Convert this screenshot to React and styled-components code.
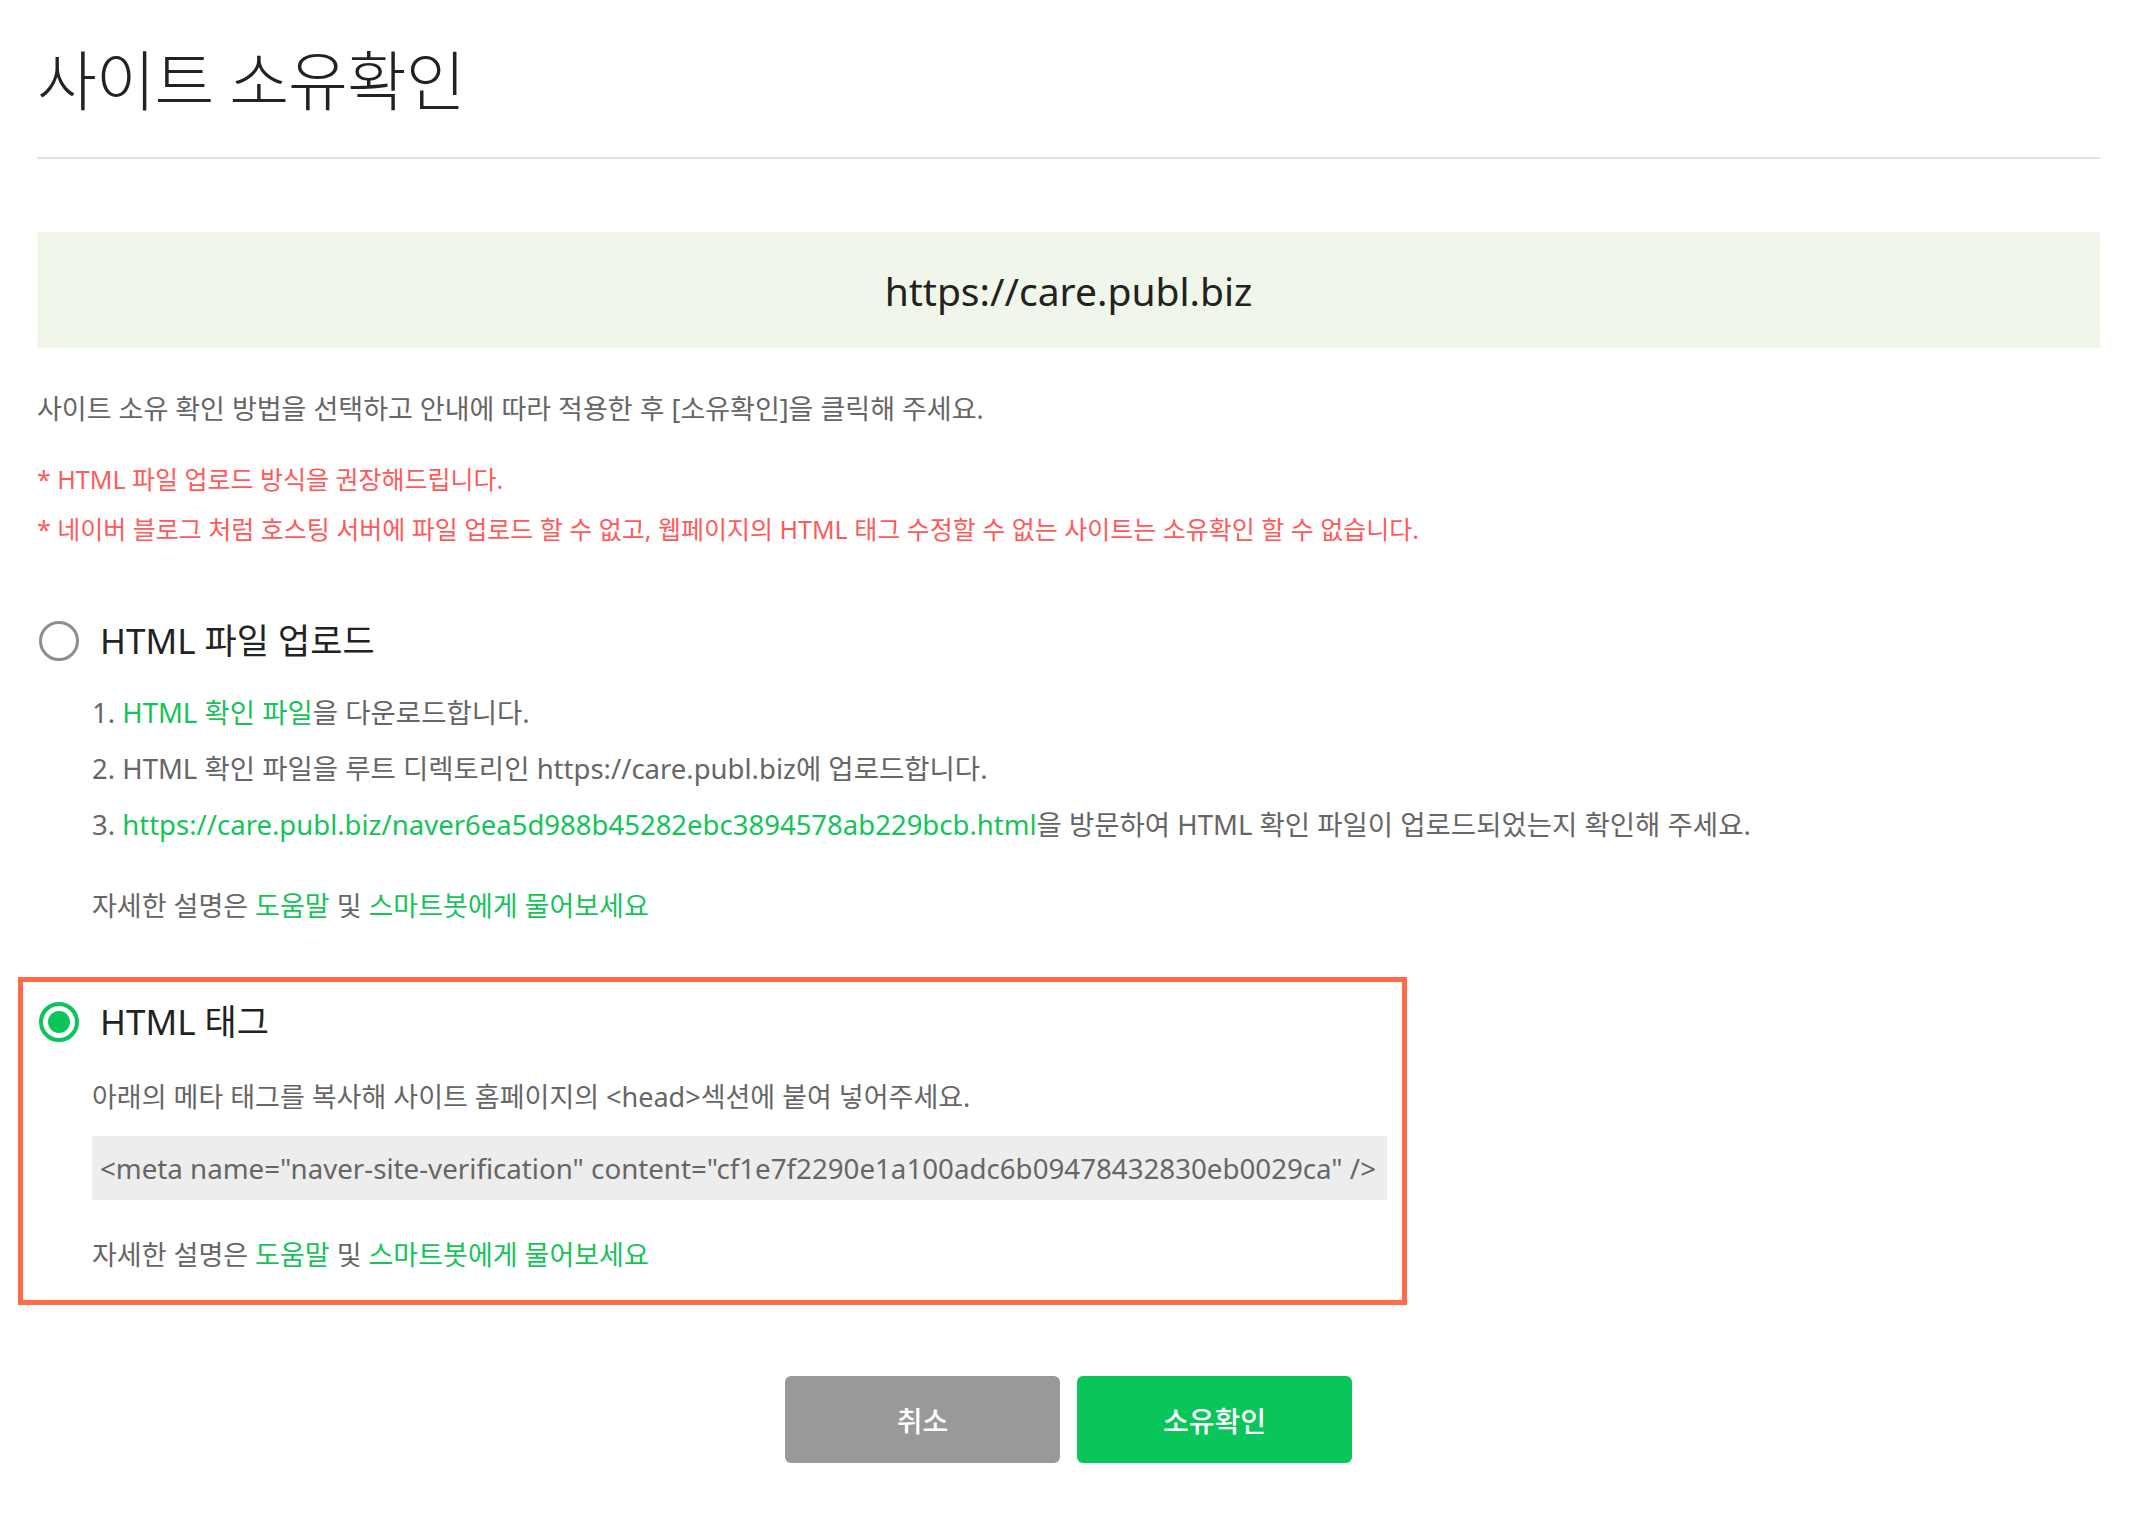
import React from 'react';
import styled, { createGlobalStyle } from 'styled-components';

const GlobalStyle = createGlobalStyle`
  html, body { margin: 0; padding: 0; background: #fff; }
  body {
    font-family: "Noto Sans", "Noto Sans CJK KR", sans-serif;
    -webkit-font-smoothing: antialiased;
  }
`;

const Page = styled.div`
  padding: 40px 38px 60px 37px;
`;

const Title = styled.h1`
  margin: 0;
  font-size: 65px;
  line-height: 80px;
  font-weight: 300;
  color: #222;
  letter-spacing: -1px;
`;

const Divider = styled.hr`
  margin: 37px 0 0;
  border: 0;
  height: 2px;
  background: #e2e2e2;
`;

const UrlBanner = styled.div`
  margin-top: 73px;
  height: 116px;
  background: #f0f6e9;
  display: flex;
  align-items: center;
  justify-content: center;
  font-size: 39px;
  color: #222;
`;

const Guide = styled.p`
  margin: 43px 0 0;
  font-size: 27px;
  line-height: 36px;
  color: #666;
`;

const Notes = styled.ul`
  margin: 27px 0 0;
  padding: 0;
  list-style: none;
`;

const Note = styled.li`
  font-size: 25px;
  line-height: 50px;
  color: #ff5a5a;
`;

const Methods = styled.div`
  margin: 42px 0 0 -19px;
  display: flex;
  flex-direction: column;
  align-items: flex-start;
  gap: 21px;
`;

const Method = styled.section`
  box-sizing: border-box;
  width: ${(p) => (p.$selected ? '1389px' : 'auto')};
  border: 5px solid ${(p) => (p.$selected ? '#ff6c47' : 'transparent')};
  padding: 20px 15px 27px 16px;
`;

const MethodHeader = styled.label`
  display: flex;
  align-items: center;
  gap: 21px;
  height: 40px;
`;

const Radio = styled.span`
  box-sizing: border-box;
  flex: none;
  width: 40px;
  height: 40px;
  border-radius: 50%;
  border: ${(p) => (p.$checked ? '4px solid #0bc45a' : '3px solid #8e8e8e')};
  display: flex;
  align-items: center;
  justify-content: center;
  &::after {
    content: '';
    width: 22px;
    height: 22px;
    border-radius: 50%;
    background: #0bc45a;
    display: ${(p) => (p.$checked ? 'block' : 'none')};
  }
`;

const MethodLabel = styled.span`
  font-size: 35px;
  line-height: 40px;
  color: #222;
`;

const Details = styled.div`
  padding-left: 53px;
`;

const Steps = styled.ol`
  margin: 24px 0 0;
  padding: 0;
  list-style: none;
`;

const Step = styled.li`
  font-size: 27.5px;
  line-height: 56px;
  color: #666;
  white-space: nowrap;
`;

const Text = styled.p`
  margin: ${(p) => p.$gap}px 0 0;
  font-size: 27px;
  line-height: 36px;
  color: #666;
`;

const Link = styled.a`
  color: #16c35a;
  text-decoration: none;
`;

const CodeBox = styled.div`
  margin-top: 21px;
  height: 64px;
  background: #ededed;
  display: flex;
  align-items: center;
  padding-left: 8px;
  font-size: 27.7px;
  color: #666;
  white-space: nowrap;
`;

const ButtonRow = styled.div`
  margin-top: 71px;
  display: flex;
  justify-content: center;
  gap: 17px;
`;

const Button = styled.button`
  width: 275px;
  height: 87px;
  border: 0;
  border-radius: 6px;
  background: ${(p) => (p.$primary ? '#08c65a' : '#999999')};
  color: #fff;
  font-family: inherit;
  font-size: 28px;
  font-weight: 500;
  cursor: pointer;
`;

const HelpLine = ({ gap }) => (
  <Text $gap={gap}>
    자세한 설명은 <Link href="#">도움말</Link> 및 <Link href="#">스마트봇에게 물어보세요</Link>
  </Text>
);

export default function App() {
  const site = 'https://care.publ.biz';
  return (
    <>
      <GlobalStyle />
      <Page>
        <Title>사이트 소유확인</Title>
        <Divider />
        <UrlBanner>{site}</UrlBanner>
        <Guide>사이트 소유 확인 방법을 선택하고 안내에 따라 적용한 후 [소유확인]을 클릭해 주세요.</Guide>
        <Notes>
          <Note>* HTML 파일 업로드 방식을 권장해드립니다.</Note>
          <Note>
            * 네이버 블로그 처럼 호스팅 서버에 파일 업로드 할 수 없고, 웹페이지의 HTML 태그 수정할 수 없는 사이트는 소유확인 할 수 없습니다.
          </Note>
        </Notes>
        <Methods>
          <Method>
            <MethodHeader>
              <Radio />
              <MethodLabel>HTML 파일 업로드</MethodLabel>
            </MethodHeader>
            <Details>
              <Steps>
                <Step>
                  1. <Link href="#">HTML 확인 파일</Link>을 다운로드합니다.
                </Step>
                <Step>2. HTML 확인 파일을 루트 디렉토리인 {site}에 업로드합니다.</Step>
                <Step>
                  3. <Link href="#">{site}/naver6ea5d988b45282ebc3894578ab229bcb.html</Link>을 방문하여 HTML 확인 파일이 업로드되었는지 확인해 주세요.
                </Step>
              </Steps>
              <HelpLine gap={35} />
            </Details>
          </Method>
          <Method $selected>
            <MethodHeader>
              <Radio $checked />
              <MethodLabel>HTML 태그</MethodLabel>
            </MethodHeader>
            <Details>
              <Text $gap={37}>아래의 메타 태그를 복사해 사이트 홈페이지의 &lt;head&gt;섹션에 붙여 넣어주세요.</Text>
              <CodeBox>
                {'<meta name="naver-site-verification" content="cf1e7f2290e1a100adc6b09478432830eb0029ca" />'}
              </CodeBox>
              <HelpLine gap={37} />
            </Details>
          </Method>
        </Methods>
        <ButtonRow>
          <Button type="button">취소</Button>
          <Button type="button" $primary>
            소유확인
          </Button>
        </ButtonRow>
      </Page>
    </>
  );
}
